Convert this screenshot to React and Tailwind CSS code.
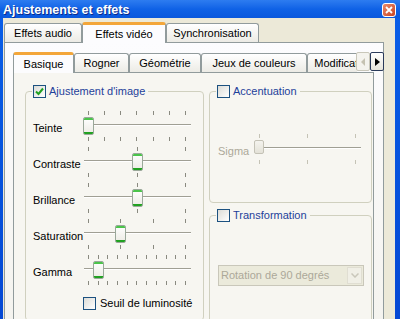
import React from 'react'

const font = { fontFamily: '"Liberation Sans", Arial, sans-serif' }

const sliders = [
  { label: 'Teinte', ticks: 7, value: 0 },
  { label: 'Contraste', ticks: 3, value: 0.5 },
  { label: 'Brillance', ticks: 3, value: 0.5 },
  { label: 'Saturation', ticks: 4, value: 1 / 3 },
  { label: 'Gamma', ticks: 11, value: 0.1 },
]

function Ticks({ count, light }) {
  return (
    <div className="flex justify-between px-[5px] h-[4px]">
      {Array.from({ length: count }).map((_, i) => (
        <span key={i} className={`w-px h-[4px] ${light ? 'bg-[#c5c3b6]' : 'bg-[#8a8a80]'}`} />
      ))}
    </div>
  )
}

function Thumb({ disabled }) {
  if (disabled) {
    return (
      <div className="w-[10px] h-[14px] rounded-[2px] border border-[#c4c2b6] bg-gradient-to-b from-[#f4f3ee] to-[#e4e2d8]" />
    )
  }
  return (
    <div className="w-[11px] h-[18px] rounded-[2px] border border-[#9aa89a] bg-gradient-to-b from-[#ffffff] to-[#ecebe4] flex flex-col justify-between">
      <div className="h-[2px] bg-[#4bc44b] rounded-t-[1px]" />
      <div className="h-[2px] bg-[#21a121] rounded-b-[1px]" />
    </div>
  )
}

function Slider({ label, ticks, value, disabled, width = 'w-[108px]', labelW = 'w-[50px]' }) {
  return (
    <div className="flex items-center">
      <div className={`${labelW} text-[11px] pt-[4px] ${disabled ? 'text-[#aca899]' : 'text-black'}`}>{label}</div>
      <div className={`${width} flex flex-col`}>
        <Ticks count={ticks} light={disabled} />
        <div className="relative h-[22px]">
          <div className="absolute left-[1px] right-0 top-[9px] h-[2px] border-t border-[#a09f94] border-b border-b-white" />
          <div
            className="absolute top-[2px]"
            style={{ left: `calc(${value} * (100% - 11px))` }}
          >
            <Thumb disabled={disabled} />
          </div>
        </div>
        <Ticks count={ticks} light={disabled} />
      </div>
    </div>
  )
}

function Checkbox({ checked }) {
  return (
    <span className="w-[13px] h-[13px] border border-[#1c5180] bg-gradient-to-br from-[#dcdcd7] to-white flex items-center justify-center shrink-0">
      {checked && (
        <svg width="9" height="9" viewBox="0 0 9 9">
          <path d="M1 4.5 L3.5 7 L8 1.5" stroke="#21a121" strokeWidth="2" fill="none" />
        </svg>
      )}
    </span>
  )
}

function GroupBox({ title, checked, className, children }) {
  return (
    <div className={`relative border border-[#d0d0bf] rounded-[4px] ${className}`}>
      <div className="absolute left-[6px] -top-[8px] flex items-center gap-[3px] bg-[#f7f6f1] pr-[3px] pl-px">
        <Checkbox checked={checked} />
        <span className="text-[11px] text-[#1e3f9a] leading-[14px]">{title}</span>
      </div>
      {children}
    </div>
  )
}

function Tab({ label, active, w }) {
  if (active) {
    return (
      <div className={`${w} relative z-10 -mb-px h-[21px] shrink-0 flex items-center justify-center border border-b-0 border-[#919b9c] border-t-[3px] border-t-[#f3a63a] rounded-t-[3px] bg-[#fcfcfe] text-[11px]`}>
        {label}
      </div>
    )
  }
  return (
    <div className={`${w} h-[19px] shrink-0 flex items-center justify-center border border-b-0 border-[#919b9c] rounded-t-[3px] bg-gradient-to-b from-white to-[#ecebe5] text-[11px] whitespace-nowrap`}>
      {label}
    </div>
  )
}

export default function App() {
  return (
    <div className="w-[400px] h-[319px] overflow-hidden flex flex-col bg-gradient-to-b from-[#0a5fe8] to-[#0548d4]" style={font}>
      <div className="h-[18px] shrink-0 flex items-start justify-between pl-[3px] pr-[4px] bg-gradient-to-b from-[#2d7cf0] via-[#0f62e6] to-[#0a58dd]">
        <span className="text-white font-bold text-[12.5px] leading-[14px] pt-[3px] [text-shadow:1px_1px_0_#0a2a8a]">
          Ajustements et effets
        </span>
        <div className="mt-[3px] w-[14px] h-[14px] rounded-[3px] border border-white bg-gradient-to-br from-[#e98a6a] to-[#c9421f] flex items-center justify-center">
          <svg width="8" height="8" viewBox="0 0 8 8">
            <path d="M1 1 L7 7 M7 1 L1 7" stroke="white" strokeWidth="1.8" />
          </svg>
        </div>
      </div>

      <div className="flex-1 ml-[3px] mr-[5px] bg-[#ece9d8] pl-px pt-[3px] pr-[11px] flex flex-col">
        <div className="flex items-end h-[21px]">
          <Tab label="Effets audio" w="w-[78px]" />
          <Tab label="Effets vidéo" active w="w-[84px]" />
          <Tab label="Synchronisation" w="w-[93px]" />
        </div>

        <div className="flex-1 border border-[#919b9c] bg-gradient-to-b from-[#fcfcfe] to-[#f4f3ee] pl-[8px] pr-[9px] pt-[9px]">
          <div className="relative flex items-end h-[20px]">
            <Tab label="Basique" active w="w-[61px]" />
            <Tab label="Rogner" w="w-[55px]" />
            <Tab label="Géométrie" w="w-[72px]" />
            <Tab label="Jeux de couleurs" w="w-[106px]" />
            <div className="overflow-hidden w-[50px] flex justify-start">
              <Tab label="Modificateurs" w="w-[80px]" />
            </div>
            <div className="absolute z-20 -right-[10px] top-0 flex">
              <div className="w-[14px] h-[19px] border border-[#c9c7ba] rounded-[2px] bg-[#f4f3ee] flex items-center justify-center">
                <svg width="5" height="8" viewBox="0 0 5 8"><path d="M4 0 L0 4 L4 8 Z" fill="#c5c2b2" /></svg>
              </div>
              <div className="w-[14px] h-[19px] border border-[#2a3a5a] rounded-[2px] bg-gradient-to-b from-white to-[#e6e4da] flex items-center justify-center">
                <svg width="5" height="8" viewBox="0 0 5 8"><path d="M0 0 L5 4 L0 8 Z" fill="#000" /></svg>
              </div>
            </div>
          </div>

          <div className="h-[260px] border border-[#919b9c] bg-[#f7f6f1] pl-[11px] pr-px pt-[18px] flex gap-[5px]">
            <GroupBox title="Ajustement d'image" checked className="w-[179px] h-[230px] pl-[7px] pt-[19px]">
              <div className="flex flex-col gap-[6px]">
                {sliders.map((s) => (
                  <Slider key={s.label} {...s} />
                ))}
              </div>
              <div className="flex items-center gap-[4px] ml-[50px] mt-[10px]">
                <Checkbox />
                <span className="text-[11px]">Seuil de luminosité</span>
              </div>
            </GroupBox>

            <div className="flex flex-col gap-[12px]">
              <GroupBox title="Accentuation" className="w-[163px] h-[112px] pl-[8px] pt-[42px]">
                <Slider label="Sigma" ticks={3} value={0} disabled width="w-[107px]" labelW="w-[36px]" />
              </GroupBox>
              <GroupBox title="Transformation" className="w-[163px] h-[110px] pl-[8px] pt-[49px]">
                <div className="w-[146px] h-[21px] border border-[#c9c7ba] bg-[#ebeadb] flex items-center justify-between pl-[2px] pr-px">
                  <span className="text-[11px] text-[#aca899]">Rotation de 90 degrés</span>
                  <span className="w-[15px] h-[17px] bg-[#f0efe6] border border-[#e0ded2] flex items-center justify-center">
                    <svg width="8" height="5" viewBox="0 0 8 5"><path d="M0.5 0.5 L4 4 L7.5 0.5" stroke="#c9c7ba" strokeWidth="1.5" fill="none" /></svg>
                  </span>
                </div>
              </GroupBox>
            </div>
          </div>
        </div>
      </div>
    </div>
  )
}
